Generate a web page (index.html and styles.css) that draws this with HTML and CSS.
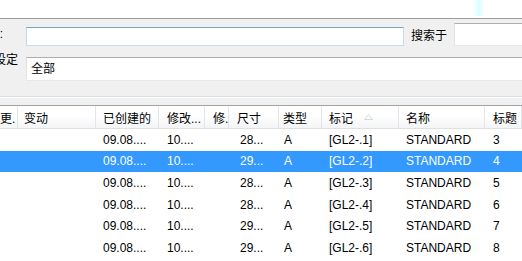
FILE: index.html
```html
<!DOCTYPE html>
<html lang="zh-CN">
<head>
    <meta charset="UTF-8">
    <meta name="viewport" content="width=device-width, initial-scale=1.0">
    <title>标记列表</title>
    <link rel="stylesheet" href="styles.css">
</head>
<body>

    <div class="topbar">
        <span class="glow"></span>
    </div>

    <div class="search-panel">
        <div class="search-row">
            <div class="label label-find"><span>查找:</span></div>
            <input class="field field-find" type="text">
            <span class="search-in">搜索于</span>
            <input class="field field-scope" type="text">
        </div>
        <div class="search-row second">
            <div class="label label-set"><span>类别设定</span></div>
            <div class="field field-category">全部</div>
        </div>
    </div>

    <div class="strip"></div>

    <div class="list">
        <div class="list-row list-head">
            <div class="cell c0">更.</div>
            <div class="cell c1">变动</div>
            <div class="cell c2">已创建的</div>
            <div class="cell c3">修改...</div>
            <div class="cell c4">修.</div>
            <div class="cell c5">尺寸</div>
            <div class="cell c6">类型</div>
            <div class="cell c7">标记
                <svg class="sort-arrow" width="9" height="6" viewBox="0 0 9 6">
                    <polygon points="4.5,0.5 8.5,5.5 0.5,5.5" fill="none" stroke="#cfdcd5" stroke-width="1"/>
                </svg>
            </div>
            <div class="cell c8">名称</div>
            <div class="cell c9">标题</div>
        </div>
        <div id="rows"></div>
    </div>

    <script>
        // Rows of the marker list, the second one is selected
        const rows = [
            { size: '28...', mark: '[GL2-.1]', title: 3 },
            { size: '29...', mark: '[GL2-.2]', title: 4, selected: true },
            { size: '28...', mark: '[GL2-.3]', title: 5 },
            { size: '28...', mark: '[GL2-.4]', title: 6 },
            { size: '29...', mark: '[GL2-.5]', title: 7 },
            { size: '29...', mark: '[GL2-.6]', title: 8 }
        ];

        const container = document.getElementById('rows');
        rows.forEach(row => {
            const line = document.createElement('div');
            line.classList.add('list-row', 'data-row');
            if (row.selected) line.classList.add('selected');
            const values = ['', '', '09.08....', '10....', '', row.size, 'A', row.mark, 'STANDARD', row.title];
            values.forEach((value, index) => {
                const cell = document.createElement('div');
                cell.classList.add('cell', 'c' + index);
                cell.innerText = value;
                line.appendChild(cell);
            });
            container.appendChild(line);
        });
    </script>

</body>
</html>
```

FILE: styles.css
```css
body {
    margin: 0;
    padding: 0;
    width: 522px;
    height: 261px;
    overflow: hidden;
    background-color: #ffffff;
    font-family: "Liberation Sans", "Noto Sans CJK SC", sans-serif;
    font-size: 12px;
    color: #000000;
}

.topbar {
    height: 18px;
    display: flex;
}

.glow {
    margin-left: 474px;
    width: 10px;
    height: 16px;
    background: linear-gradient(to right, #f4ffff, #ddfbfd, #f4ffff);
}

.search-panel {
    background-color: #f0f0f0;
    border-top: 1px solid #9c9c9c;
    border-bottom: 1px solid #d6dee6;
    padding: 4px 0 15px 0;
    overflow: hidden;
}

.search-row {
    display: flex;
    align-items: center;
    height: 23px;
}

.search-row.second {
    margin-top: 11px;
    height: 24px;
    align-items: flex-start;
}

.label {
    width: 26px;
    flex-shrink: 0;
    display: flex;
    justify-content: flex-end;
    overflow: hidden;
    white-space: nowrap;
    line-height: 17px;
}

.label-find span {
    margin-right: 23px;
}

.label-set {
    margin-top: -5px;
}

.label-set span {
    margin-right: 8px;
}

.field {
    box-sizing: border-box;
    margin: 0;
    padding: 0 4px;
    background-color: #ffffff;
    font: inherit;
    outline: none;
    border: 1px solid #e3e9ef;
    border-top-color: #abadb3;
    border-left-color: #e2e3ea;
}

.field-find {
    width: 378px;
    height: 19px;
    flex-shrink: 0;
    align-self: flex-end;
    border-color: #c5daeb;
    border-top-color: #7da2c6;
}

.search-in {
    margin-left: 7px;
    width: 36px;
    flex-shrink: 0;
    white-space: nowrap;
}

.field-scope {
    margin-left: 7px;
    width: 100px;
    height: 23px;
    flex-shrink: 0;
}

.field-category {
    flex: 1;
    height: 24px;
    line-height: 22px;
    margin-right: -3px;
}

.strip {
    height: 7px;
    background-color: #f0f0f0;
    border-top: 1px solid #ffffff;
    border-bottom: 1px solid #a3a3a3;
}

.list-row {
    display: grid;
    grid-template-columns: 18px 78px 63px 46px 24px 50px 43px 77px 86px 1fr;
    white-space: nowrap;
}

.list-head {
    height: 22px;
    background: linear-gradient(#ffffff 0%, #ffffff 45%, #f3f4f6 100%);
    border-bottom: 1px solid #e0e0e0;
}

.list-head .cell {
    border-right: 1px solid #e3e5e8;
}

.cell {
    box-sizing: border-box;
    padding-left: 7px;
    display: flex;
    align-items: center;
    overflow: hidden;
}

.c0 { padding-left: 0; }
.c1 { padding-left: 6px; }
.c3 { padding-left: 8px; }
.c4 { padding-left: 8px; }
.c5 { padding-left: 8px; }
.c6 { padding-left: 4px; }
.c9 { padding-left: 8px; }

.data-row .c5 { padding-left: 11px; }
.data-row .c6 { padding-left: 5px; }

.sort-arrow {
    margin-left: 11px;
}

.data-row {
    height: 21.6px;
}

.data-row.selected {
    background-color: #3399ff;
    color: #ffffff;
}
```
